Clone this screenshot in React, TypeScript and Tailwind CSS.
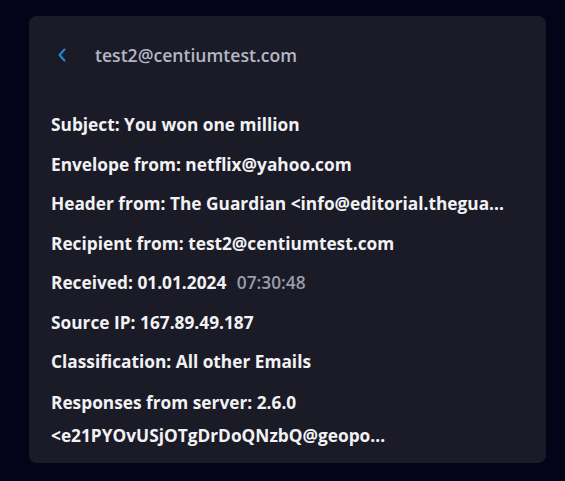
import React from "react";

export default function App() {
  return (
    <div
      className="w-[565px] h-[481px] bg-[#03041a] pt-4 pl-[29px]"
      style={{ fontFamily: '"Open Sans", "Noto Sans", sans-serif' }}
    >
      <div className="w-[517px] h-[447px] rounded-lg bg-[#1b1b27] pl-[22px] pr-[30px] pt-[28px]">
        <div className="flex items-center h-[22px]">
          <svg width="10" height="14" viewBox="0 0 10 14" className="ml-[6px]">
            <path d="M7.5 1.5 L2.5 7 L7.5 12.5" fill="none" stroke="#1f8ad6" strokeWidth="2" strokeLinecap="round" strokeLinejoin="round" />
          </svg>
          <span className="ml-[28px] text-[17.6px] font-semibold text-[#b5b7c4]">test2@centiumtest.com</span>
        </div>
        <div className="mt-[48px] flex flex-col gap-[17.5px] text-[17.3px] font-bold text-[#f2f2f5] leading-[22px] whitespace-nowrap">
          <div>Subject: You won one million</div>
          <div>Envelope from: netflix@yahoo.com</div>
          <div>Header from: The Guardian &lt;info@editorial.thegua...</div>
          <div>Recipient from: test2@centiumtest.com</div>
          <div>
            Received: 01.01.2024 <span className="ml-[6px] font-semibold text-[#9a9cab]">07:30:48</span>
          </div>
          <div>Source IP: 167.89.49.187</div>
          <div>Classification: All other Emails</div>
          <div className="leading-[33px] -mt-[5px]">
            <div>Responses from server: 2.6.0</div>
            <div>&lt;e21PYOvUSjOTgDrDoQNzbQ@geopo...</div>
          </div>
        </div>
      </div>
    </div>
  );
}
